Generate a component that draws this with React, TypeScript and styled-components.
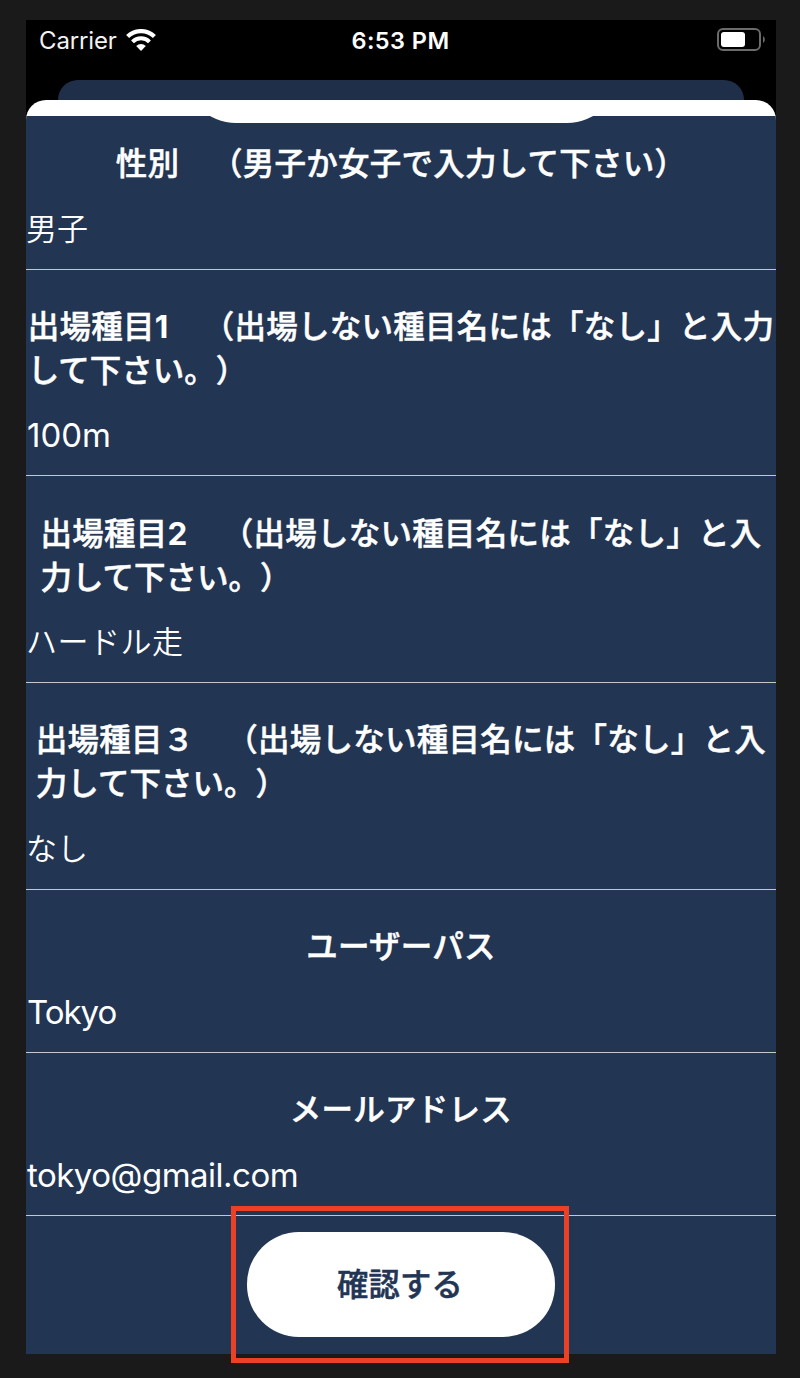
import React from "react";
import styled, { createGlobalStyle } from "styled-components";

const NAVY = "#223553";

const GlobalStyle = createGlobalStyle`
  html, body { margin: 0; background: #1a1a1a; }
  * { box-sizing: border-box; }
`;

const Desktop = styled.div`
  position: relative;
  width: 800px;
  height: 1378px;
  padding: 20px 24px 24px 26px;
  overflow: hidden;
  background: #1a1a1a;
  font-family: Inter, "Noto Sans CJK JP", sans-serif;
  text-spacing-trim: space-all;
`;

const Phone = styled.div`
  display: flex;
  flex-direction: column;
  width: 750px;
  height: 1334px;
  background: #000;
`;

const StatusBar = styled.header`
  display: grid;
  grid-template-columns: 1fr auto 1fr;
  align-items: center;
  height: 40px;
  padding: 0 10px 0 13px;
  color: #fff;
  font-size: 24px;
  line-height: 38px;
`;

const CarrierArea = styled.div`
  display: flex;
  align-items: center;
  gap: 9px;
`;

const Carrier = styled.span`
  width: 78px;
  padding-top: 2px;
  letter-spacing: -0.15px;
  white-space: nowrap;
  color: #f2f2f2;
`;

const Clock = styled.span`
  padding-top: 2px;
  margin-right: 4px;
  font-weight: 600;
  font-size: 23.5px;
  letter-spacing: 0.45px;
  white-space: nowrap;
`;

const BatteryIcon = styled.svg`
  justify-self: end;
`;

const BackSheet = styled.div`
  width: 686px;
  height: 20px;
  margin: 20px 0 0 32px;
  border-radius: 20px 20px 0 0;
  background: #1f2f4a;
`;

const Sheet = styled.main`
  flex: 1;
  display: flex;
  flex-direction: column;
  padding-top: 16px;
  border-radius: 20px 20px 0 0;
  overflow: hidden;
  background: #fff;
`;

const Form = styled.form`
  flex: 1;
  display: flex;
  flex-direction: column;
  align-items: center;
  overflow: hidden;
  background: ${NAVY};
`;

const ScrolledPill = styled.div`
  flex: none;
  width: 435px;
  height: 104px;
  margin: -97px 0 0 1px;
  border-radius: 52px;
  background: #fff;
`;

const Field = styled.section<{ $height: number }>`
  display: flex;
  flex: none;
  flex-direction: column;
  justify-content: flex-end;
  align-items: center;
  width: 750px;
  height: ${(p) => p.$height}px;
  border-bottom: 1px solid #c8c8cb;
`;

const Label = styled.label`
  color: #fff;
  font-size: 31.5px;
  font-weight: 500;
  -webkit-text-stroke: 0.5px currentColor;
  line-height: 44px;
  white-space: nowrap;
`;

const LabelLine = styled.span<{ $spacing: number }>`
  display: block;
  letter-spacing: ${(p) => p.$spacing}px;
`;

const Digit = styled.span`
  margin-right: 2.5px;
  font-weight: 700;
  -webkit-text-stroke: 0;
`;

const Value = styled.div<{ $latin: boolean; $spacing: number; $height: number }>`
  align-self: stretch;
  height: ${(p) => p.$height}px;
  padding: ${(p) => p.$height - 62}px 0 0 ${(p) => (p.$latin ? 1 : 0)}px;
  color: #fff;
  font-size: ${(p) => (p.$latin ? 33 : 31)}px;
  font-weight: ${(p) => (p.$latin ? 400 : 350)};
  letter-spacing: ${(p) => p.$spacing}px;
  line-height: 44px;
`;

const Submit = styled.button`
  flex: none;
  width: 308px;
  height: 105px;
  margin: 16px 0 0;
  padding: 0 2px 4px 0;
  border: 0;
  border-radius: 52px;
  background: #fff;
  color: ${NAVY};
  font: 500 31.3px/44px "Noto Sans CJK JP", sans-serif;
  letter-spacing: 0.2px;
  -webkit-text-stroke: 0.5px currentColor;
`;

const Highlight = styled.div`
  position: absolute;
  left: 231px;
  top: 1206px;
  width: 338px;
  height: 157px;
  border: 5px solid #ec4127;
  pointer-events: none;
`;

type FieldData = {
  title: string;
  digit?: string;
  note?: string;
  more?: string;
  value: string;
  latin?: boolean;
  valueSpacing?: number;
  valueHeight: number;
  height: number;
};

const fields: FieldData[] = [
  { title: "性別　（男子か女子で入力して下さい）", value: "男子", valueHeight: 83, height: 147 },
  {
    title: "出場種目",
    digit: "1",
    note: "　（出場しない種目名には「なし」と入力",
    more: "して下さい。）",
    value: "100m",
    latin: true,
    valueHeight: 82,
    height: 206,
  },
  {
    title: "出場種目",
    digit: "2",
    note: "　（出場しない種目名には「なし」と入",
    more: "力して下さい。）",
    value: "ハードル走",
    valueSpacing: 0.5,
    valueHeight: 82,
    height: 207,
  },
  {
    title: "出場種目３　（出場しない種目名には「なし」と入",
    more: "力して下さい。）",
    value: "なし",
    valueHeight: 83,
    height: 207,
  },
  { title: "ユーザーパス", value: "Tokyo", latin: true, valueSpacing: -1, valueHeight: 83, height: 163 },
  { title: "メールアドレス", value: "tokyo@gmail.com", latin: true, valueSpacing: -0.5, valueHeight: 83, height: 163 },
];

const Wifi = () => (
  <svg width="30" height="22" viewBox="0 0 30 22" fill="none">
    <path d="M1.6 7.6A19 19 0 0 1 28.4 7.6" stroke="#fff" strokeWidth="4.2" />
    <path d="M6.5 12.9A12 12 0 0 1 23.5 12.9" stroke="#fff" strokeWidth="4" />
    <path d="M10.2 17.1A6.8 6.8 0 0 1 19.8 17.1L15 22Z" fill="#fff" />
  </svg>
);

const Battery = () => (
  <BatteryIcon width="49" height="24" viewBox="0 0 49 24" fill="none">
    <rect x="1" y="1" width="42" height="21" rx="5" stroke="#6b6b6b" strokeWidth="2" />
    <rect x="4" y="4" width="24" height="15" rx="3" fill="#fff" />
    <path d="M46 8C48.4 9.4 48.4 13.6 46 15Z" fill="#6b6b6b" />
  </BatteryIcon>
);

export default function App() {
  return (
    <Desktop>
      <GlobalStyle />
      <Phone>
        <StatusBar>
          <CarrierArea>
            <Carrier>Carrier</Carrier>
            <Wifi />
          </CarrierArea>
          <Clock>6:53 PM</Clock>
          <Battery />
        </StatusBar>
        <BackSheet />
        <Sheet>
          <Form>
            <ScrolledPill />
            {fields.map((f) => (
              <Field key={f.value} $height={f.height}>
                <Label>
                  <LabelLine $spacing={0.25}>
                    {f.title}
                    {f.digit && <Digit>{f.digit}</Digit>}
                    {f.note}
                  </LabelLine>
                  {f.more && <LabelLine $spacing={0}>{f.more}</LabelLine>}
                </Label>
                <Value $latin={!!f.latin} $spacing={f.valueSpacing ?? 0} $height={f.valueHeight}>
                  {f.value}
                </Value>
              </Field>
            ))}
            <Submit type="button">確認する</Submit>
          </Form>
        </Sheet>
      </Phone>
      <Highlight />
    </Desktop>
  );
}
